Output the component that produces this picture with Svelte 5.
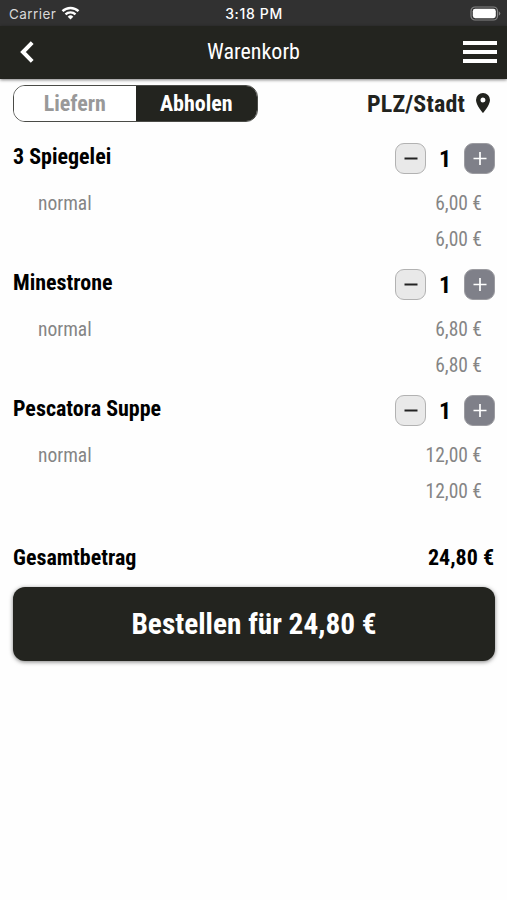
<script lang="ts">
  interface Item {
    name: string;
    variant: string;
    price: number;
    count: number;
  }

  let items: Item[] = $state([
    { name: '3 Spiegelei', variant: 'normal', price: 6, count: 1 },
    { name: 'Minestrone', variant: 'normal', price: 6.8, count: 1 },
    { name: 'Pescatora Suppe', variant: 'normal', price: 12, count: 1 }
  ]);
  let mode = $state('pickup');
  let total = $derived(items.reduce((sum, item) => sum + item.price * item.count, 0));

  function euro(value: number) {
    return value.toFixed(2).replace('.', ',') + ' €';
  }

  function change(item: Item, step: number) {
    item.count = Math.max(0, item.count + step);
  }
</script>

<div class="screen">
  <div class="status">
    <div class="carrier">
      <span>Carrier</span>
      <svg width="19" height="14" viewBox="0 0 18 14" fill="none" stroke="#fff" stroke-width="2.4">
        <path d="M1 5.2a11.5 11.5 0 0 1 16 0" />
        <path d="M4 8.4a7.2 7.2 0 0 1 10 0" />
        <path d="M9 13.6 6.2 10.7a4 4 0 0 1 5.6 0z" fill="#fff" stroke="none" />
      </svg>
    </div>
    <span class="time">3:18 PM</span>
    <svg class="battery" width="31" height="15" viewBox="0 0 31 15">
      <rect x="1" y="1" width="26.5" height="13" rx="4" fill="none" stroke="#858585" stroke-width="1.2" />
      <rect x="2.8" y="2.8" width="23" height="9.4" rx="2.4" fill="#fff" />
      <path d="M28.8 5.2q3 2.3 0 4.6z" fill="#858585" />
    </svg>
  </div>

  <header>
    <button class="plain back" aria-label="Zurück">
      <svg width="14" height="22" viewBox="0 0 14 22" fill="none" stroke="#fff" stroke-width="4">
        <path d="M12.2 1.7 3 11l9.2 9.3" />
      </svg>
    </button>
    <h1>Warenkorb</h1>
    <button class="plain menu" aria-label="Menü">
      <span></span>
      <span></span>
      <span></span>
    </button>
  </header>

  <main>
    <div class="options">
      <div class="toggle">
        <button class:active={mode === 'delivery'} onclick={() => (mode = 'delivery')}>Liefern</button>
        <button class:active={mode === 'pickup'} onclick={() => (mode = 'pickup')}>Abholen</button>
      </div>
      <button class="plain place">
        <span>PLZ/Stadt</span>
        <svg width="14" height="20" viewBox="0 0 14 20">
          <path fill="#22231e" fill-rule="evenodd" d="M7 0a7 7 0 0 0-7 7c0 5.2 7 13 7 13s7-7.8 7-13a7 7 0 0 0-7-7zm0 9.5a2.5 2.5 0 1 1 0-5 2.5 2.5 0 0 1 0 5z" />
        </svg>
      </button>
    </div>

    {#each items as item}
      <section class="item">
        <div class="head">
          <h2>{item.name}</h2>
          <div class="stepper">
            <button class="minus" aria-label="Weniger" onclick={() => change(item, -1)}>
              <svg width="14" height="14" viewBox="0 0 14 14" stroke="#222" stroke-width="2"><path d="M0.5 6.5h13" /></svg>
            </button>
            <span class="count">{item.count}</span>
            <button class="plus" aria-label="Mehr" onclick={() => change(item, 1)}>
              <svg width="14" height="14" viewBox="0 0 14 14" stroke="#fff" stroke-width="1.7"><path d="M0.5 6.5h13M7 0v13" /></svg>
            </button>
          </div>
        </div>
        <div class="line">
          <span>{item.variant}</span>
          <span>{euro(item.price)}</span>
        </div>
        <div class="line sum">
          <span>{euro(item.price * item.count)}</span>
        </div>
      </section>
    {/each}

    <div class="total">
      <span>Gesamtbetrag</span>
      <span>{euro(total)}</span>
    </div>
    <button class="order">Bestellen für {euro(total)}</button>
  </main>
</div>

<style>
  :global(body) {
    margin: 0;
    background: #fefefe;
  }

  .screen {
    min-height: 900px;
    font-family: 'Roboto Condensed', Roboto, sans-serif;
    font-stretch: 75%;
    color: #000;
  }

  button {
    padding: 0;
    border: 0;
    font: inherit;
    letter-spacing: inherit;
    color: inherit;
    cursor: pointer;
  }

  .plain {
    background: none;
  }

  .status {
    display: grid;
    grid-template-columns: 1fr auto 1fr;
    align-items: center;
    height: 26px;
    padding: 0 6px 0 9px;
    box-sizing: border-box;
    background: #313131;
    color: #fff;
    font-family: Inter, sans-serif;
    font-stretch: normal;
    font-size: 13.5px;
    line-height: 16px;
  }

  .carrier {
    display: flex;
    align-items: center;
    gap: 5px;
    padding-top: 1px;
    color: #d8d8d8;
    letter-spacing: 0.45px;
  }

  .carrier svg {
    margin-top: -2px;
  }

  .time {
    padding: 1px 2px 0 0;
    font-weight: 500;
    font-size: 14px;
    letter-spacing: 0.65px;
  }

  .battery {
    justify-self: end;
  }

  header {
    display: grid;
    grid-template-columns: 1fr auto 1fr;
    align-items: center;
    height: 53px;
    padding: 0 10px 2px 20px;
    box-sizing: border-box;
    background: #23241f;
    color: #fff;
    box-shadow: 0 1px 3px rgba(0, 0, 0, 0.5);
  }

  .back {
    display: flex;
    justify-self: start;
  }

  h1 {
    margin: 0 10px 0 0;
    font-size: 22px;
    font-weight: 400;
  }

  .menu {
    display: flex;
    flex-direction: column;
    justify-self: end;
    gap: 5px;
    width: 34px;
  }

  .menu span {
    height: 4px;
    background: #fff;
  }

  main {
    padding: 6px 12px 0 13px;
  }

  .options {
    display: flex;
    justify-content: space-between;
    align-items: center;
    font-size: 22px;
    font-weight: 700;
  }

  .toggle {
    display: flex;
    width: 245px;
    height: 37px;
    box-sizing: border-box;
    border: 1px solid #4a4b47;
    border-radius: 12px;
    overflow: hidden;
  }

  .toggle button {
    flex: 1;
    padding-bottom: 1px;
    background: #fff;
    color: #999;
  }

  .toggle button.active {
    background: #23241f;
    color: #fff;
  }

  .place {
    display: flex;
    align-items: center;
    gap: 11px;
    padding-right: 5px;
    color: #22231e;
    font-size: 24px;
    letter-spacing: 0.15px;
  }

  .place svg {
    margin-top: -2px;
  }

  .item {
    height: 126px;
  }

  .options + .item {
    margin-top: 21px;
  }

  .head {
    display: flex;
    justify-content: space-between;
    height: 31px;
  }

  h2 {
    margin: 0;
    font-size: 22px;
    line-height: 27px;
    font-weight: 700;
  }

  .stepper {
    display: flex;
    align-items: center;
  }

  .stepper button {
    display: flex;
    align-items: center;
    justify-content: center;
    width: 31px;
    height: 31px;
    border: 1px solid #b2b2b2;
    border-radius: 9px;
    background: #e9e9e9;
  }

  .stepper .plus {
    border-color: #9c9ca1;
    background: #7f8089;
  }

  .count {
    width: 38px;
    text-align: center;
    font-size: 24px;
    font-weight: 700;
  }

  .line {
    display: flex;
    justify-content: space-between;
    margin-top: 12px;
    padding: 0 13px 0 25px;
    font-size: 19.5px;
    line-height: 36px;
    color: #858585;
  }

  .sum {
    justify-content: flex-end;
    margin-top: 0;
    line-height: 35px;
  }

  .total {
    display: flex;
    justify-content: space-between;
    margin-top: 24px;
    padding-right: 1px;
    font-size: 22px;
    line-height: 26px;
    font-weight: 700;
  }

  .order {
    display: block;
    width: 100%;
    height: 74px;
    margin-top: 16px;
    padding-bottom: 1px;
    border-radius: 12px;
    background: #23241f;
    color: #fff;
    font-size: 29.3px;
    font-weight: 700;
    box-shadow: 0 1px 4px rgba(0, 0, 0, 0.5);
  }
</style>
